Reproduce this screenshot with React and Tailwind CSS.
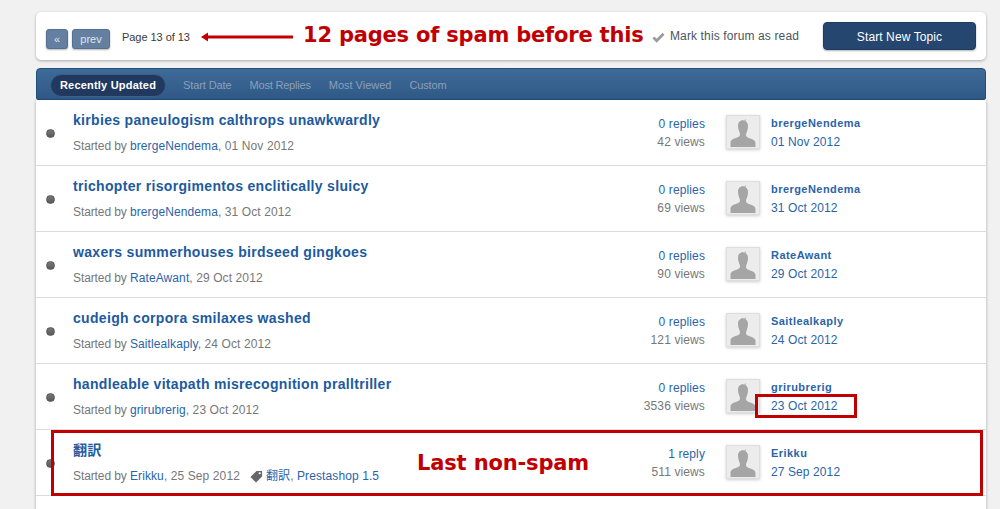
const FONT = "font-['Liberation_Sans','Noto_Sans_CJK_JP',sans-serif]";

const rows = [
  { t: "kirbies paneulogism calthrops unawkwardly", a: "brergeNendema", d: "01 Nov 2012", r: "0 replies", v: "42 views", l: "brergeNendema", ld: "01 Nov 2012" },
  { t: "trichopter risorgimentos enclitically sluicy", a: "brergeNendema", d: "31 Oct 2012", r: "0 replies", v: "69 views", l: "brergeNendema", ld: "31 Oct 2012" },
  { t: "waxers summerhouses birdseed gingkoes", a: "RateAwant", d: "29 Oct 2012", r: "0 replies", v: "90 views", l: "RateAwant", ld: "29 Oct 2012" },
  { t: "cudeigh corpora smilaxes washed", a: "Saitlealkaply", d: "24 Oct 2012", r: "0 replies", v: "121 views", l: "Saitlealkaply", ld: "24 Oct 2012" },
  { t: "handleable vitapath misrecognition pralltriller", a: "grirubrerig", d: "23 Oct 2012", r: "0 replies", v: "3536 views", l: "grirubrerig", ld: "23 Oct 2012" },
  { t: "翻訳", a: "Erikku", d: "25 Sep 2012", r: "1 reply", v: "511 views", l: "Erikku", ld: "27 Sep 2012", tags: true },
];

function Avatar() {
  return (
    <div className="w-[34px] h-[34px] bg-[#ececec] border border-[#dedede] shadow-[0_1px_3px_rgba(0,0,0,0.2)] p-px">
      <svg viewBox="0 0 30 30" className="w-full h-full block">
        <path fill="#a5a5a5" d="M15 3c-1 0-1.500.5-2 .8-2 .7-3 2.200-3 4.700 0 2 .5 4 1 5.500.5 1.300 1 2 1 3.500 0 1.500-1 2.300-3 3-3 1-6 2-6.500 4.500V30h25v-4.500c-.5-2.500-3.500-3.500-6.500-4.500-2-.7-3-1.500-3-3 0-1.500.5-2.200 1-3.500.5-1.500 1-3.500 1-5.500 0-2.500-1-4-2.500-4.800.1-.7.3-1.200.8-1.700-.8.1-1.600.4-2.300 1.500C15.500 3.300 15.300 3 15 3z" />
      </svg>
    </div>
  );
}

function Row({ x }) {
  return (
    <div className="flex h-[66px] border-b border-[#dcdcdc]">
      <div className="w-[37px] shrink-0 pl-[10px] pt-[29px]">
        <div className="w-[9px] h-[9px] rounded-full bg-gradient-to-b from-[#777] to-[#5a5a5a] border border-[#555]" />
      </div>
      <div className="flex-1 min-w-0 pt-[11px]">
        <div className="text-[14px] leading-[18px] font-bold text-[#1d5a9e] tracking-[0.32px]">{x.t}</div>
        <div className="text-[12px] leading-[16px] mt-[9px] text-[#777] flex items-center whitespace-pre">
          <span><span className="tracking-[-0.1px]">Started by </span><span className="text-[#2a64a8] tracking-[0.1px]">{x.a}</span><span className="tracking-[0.1px]">, {x.d}</span></span>
          {x.tags && (
            <span className="flex items-center ml-[10px] tracking-[0.1px]">
              <svg viewBox="0 0 14 14" className="w-[13px] h-[13px] mr-[3px]">
                <path fill="#666" d="M7 1h6v6l-6.500 6.500L.5 7.500z" />
                <circle cx="10.500" cy="3.500" r="1.200" fill="#fff" />
              </svg>
              <span className="text-[#2a64a8]">翻訳</span>, <span className="text-[#2a64a8]">Prestashop 1.5</span>
            </span>
          )}
        </div>
      </div>
      <div className="w-[100px] shrink-0 text-right text-[12px] leading-[18px] pt-[15px] tracking-[0.12px]">
        <div className="text-[#2a64a8]">{x.r}</div>
        <div className="text-[#777]">{x.v}</div>
      </div>
      <div className="w-[21px] shrink-0" />
      <div className="w-[45px] shrink-0 pt-[15px]"><Avatar /></div>
      <div className="w-[215px] shrink-0 pt-[14px]">
        <div className="text-[11px] leading-[18px] font-bold text-[#2a64a8] tracking-[0.45px]">{x.l}</div>
        <div className="text-[12px] leading-[18px] mt-px text-[#2a64a8] tracking-[0.1px]">{x.ld}</div>
      </div>
    </div>
  );
}

export default function App() {
  return (
    <div className={`relative h-[509px] w-[1000px] overflow-hidden bg-[#f1f1f1] ${FONT}`}>
      <div className="ml-[36px] w-[950px] pt-[12px]">
        <div className="h-[48px] bg-white rounded-[5px] shadow-[0_1px_3px_rgba(0,0,0,0.3)] flex items-center pl-[10px] pr-[10px]">
          <div className="flex gap-[4px] mt-[6px]">
            <div className="w-[22px] h-[20px] rounded-[3px] bg-[#647f9f] border border-[#56708f] shadow-[0_1px_2px_rgba(0,0,0,0.3)] text-[#dfe6ee] text-[11px] leading-[18px] text-center">«</div>
            <div className="w-[38px] h-[20px] rounded-[3px] bg-[#647f9f] border border-[#56708f] shadow-[0_1px_2px_rgba(0,0,0,0.3)] text-[#dfe6ee] text-[11px] leading-[18px] text-center">prev</div>
          </div>
          <div className="ml-[12px] mt-[3px] text-[11px] text-[#3a3a3a] whitespace-nowrap tracking-[-0.05px]">Page 13 of 13</div>
          <div className="flex-1" />
          <svg viewBox="0 0 14 12" className="w-[13px] h-[11px] mt-[2px]">
            <path fill="none" stroke="#9a9a9a" strokeWidth="3" d="M1.500 6l3.500 3.500L12.500 2" />
          </svg>
          <div className="ml-[5px] mr-[24px] text-[12px] text-[#4a5560] whitespace-nowrap -mt-px tracking-[0.13px]">Mark this forum as read</div>
          <div className="w-[153px] h-[28px] rounded-[4px] bg-[#24466f] border border-[#1e3c60] shadow-[0_1px_2px_rgba(0,0,0,0.3)] text-white text-[12px] leading-[28px] text-center tracking-[0.1px]">Start New Topic</div>
        </div>

        <div className="mt-[8px] h-[32px] rounded-t-[4px] rounded-b-[2px] bg-gradient-to-b from-[#3f6b98] to-[#2f5887] border border-[#1f5078] flex items-center pl-[13px] pt-[2px] text-[11px]">
          <div className="h-[23px] w-[116px] rounded-full bg-[#21395f] border border-[#3c5f88] text-white font-bold leading-[21px] text-center whitespace-nowrap tracking-[0.2px]">Recently Updated</div>
          <div className="ml-[17px] text-[#8ba0b8] whitespace-nowrap tracking-[-0.1px]">Start Date</div>
          <div className="ml-[18px] text-[#8ba0b8] whitespace-nowrap tracking-[-0.2px]">Most Replies</div>
          <div className="ml-[18px] text-[#8ba0b8] whitespace-nowrap">Most Viewed</div>
          <div className="ml-[18px] text-[#8ba0b8] whitespace-nowrap tracking-[-0.15px]">Custom</div>
        </div>

        <div className="bg-white shadow-[0_1px_3px_rgba(0,0,0,0.3)] h-[420px]">
          {rows.map((x) => <Row key={x.t} x={x} />)}
        </div>
      </div>

      <svg viewBox="0 0 92 10" className="absolute left-[201px] top-[32px] w-[92px] h-[10px]">
        <path fill="#c00000" d="M0 5l7-4.500v3h85v3H7v3z" />
      </svg>
      <div className="absolute left-[303px] top-[21px] text-[21px] leading-[28px] font-bold text-[#c00000] font-['DejaVu_Sans',sans-serif] whitespace-nowrap tracking-[-0.2px]">12 pages of spam before this</div>
      <div className="absolute left-[417px] top-[450px] text-[21px] leading-[26px] font-bold text-[#c00000] font-['DejaVu_Sans',sans-serif] whitespace-nowrap tracking-[-0.15px]">Last non-spam</div>
      <div className="absolute left-[51px] top-[430px] w-[932px] h-[66px] border-[3px] border-[#c00000]" />
      <div className="absolute left-[755px] top-[394px] w-[102px] h-[24px] border-[3px] border-[#c00000]" />
    </div>
  );
}
